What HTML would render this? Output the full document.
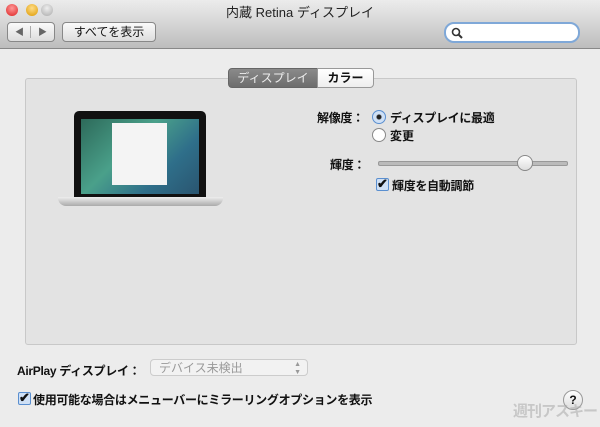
<html><head><style>
body{margin:0;width:600px;height:427px;background:#ececec;font-family:"Liberation Sans","Noto Sans CJK JP",sans-serif;font-size:12px;color:#111;position:relative;overflow:hidden}
.a{position:absolute;white-space:nowrap}
</style></head><body>
<div class="a" style="left:0;top:0;width:600px;height:48px;background:linear-gradient(#ececec,#bdbdbd);border-bottom:1px solid #888"></div>
<div class="a" style="left:6px;top:4px;width:12px;height:12px;border-radius:50%;background:radial-gradient(circle at 50% 35%,#f99,#d22)"></div>
<div class="a" style="left:26px;top:4px;width:12px;height:12px;border-radius:50%;background:radial-gradient(circle at 50% 35%,#fd8,#d90)"></div>
<div class="a" style="left:41px;top:4px;width:12px;height:12px;border-radius:50%;background:radial-gradient(circle at 50% 35%,#eee,#aaa)"></div>
<div class="a" style="left:0;top:2px;width:600px;text-align:center;font-size:13px;color:#222">内蔵 Retina ディスプレイ</div>
<div class="a" style="left:7px;top:22px;width:46px;height:18px;border:1px solid #888;border-radius:4px;background:linear-gradient(#fafafa,#ddd);font-size:9px;color:#666;line-height:18px"><span style="position:absolute;left:7px">◀</span><span style="position:absolute;left:22px;top:3px;width:1px;height:12px;background:#aaa"></span><span style="position:absolute;left:30px">▶</span></div>
<div class="a" style="left:62px;top:22px;width:92px;height:18px;border:1px solid #888;border-radius:4px;background:linear-gradient(#fafafa,#ddd);text-align:center;line-height:18px;font-size:12px">すべてを表示</div>
<div class="a" style="left:444px;top:22px;width:132px;height:17px;border:2px solid #7fa8d8;border-radius:10px;background:#fff"><svg style="position:absolute;left:5px;top:3px" width="12" height="12"><circle cx="5" cy="5" r="3.5" fill="none" stroke="#333" stroke-width="1.6"/><line x1="7.5" y1="7.5" x2="11" y2="11" stroke="#333" stroke-width="2"/></svg></div>
<div class="a" style="left:25px;top:78px;width:550px;height:265px;background:#e3e3e3;border:1px solid #c8c8c8;border-radius:3px"></div>
<div class="a" style="left:228px;top:68px;width:88px;height:18px;border:1px solid #666;border-radius:4px 0 0 4px;background:linear-gradient(#8a8a8a,#6d6d6d);color:#eee;text-align:center;line-height:18px">ディスプレイ</div>
<div class="a" style="left:317px;top:68px;width:55px;height:18px;border:1px solid #999;border-radius:0 4px 4px 0;background:linear-gradient(#fff,#eee);text-align:center;line-height:18px;font-weight:bold">カラー</div>
<div class="a" style="left:74px;top:111px;width:132px;height:86px;background:#111;border-radius:5px 5px 0 0"></div>
<div class="a" style="left:81px;top:119px;width:118px;height:75px;background:linear-gradient(135deg,#2d6a5a,#4aa08a 40%,#2f6f8a 70%,#2a5570)"></div>
<div class="a" style="left:112px;top:123px;width:55px;height:62px;background:#f4f4f4"></div>
<div class="a" style="left:58px;top:197px;width:165px;height:9px;background:linear-gradient(#eee,#aaa);border-radius:0 0 8px 8px"></div>
<div class="a" style="left:317px;top:109px;font-weight:bold;letter-spacing:-0.3px">解像度：</div>
<div class="a" style="left:372px;top:110px;width:12px;height:12px;border-radius:50%;border:1px solid #5a8fd0;background:radial-gradient(circle,#222 2px,#cfe0f5 3px)"></div>
<div class="a" style="left:390px;top:109px;font-weight:bold;letter-spacing:-0.3px">ディスプレイに最適</div>
<div class="a" style="left:372px;top:128px;width:12px;height:12px;border-radius:50%;border:1px solid #888;background:#fff"></div>
<div class="a" style="left:390px;top:127px;font-weight:bold">変更</div>
<div class="a" style="left:330px;top:156px;font-weight:bold;letter-spacing:-0.3px">輝度：</div>
<div class="a" style="left:378px;top:161px;width:188px;height:3px;background:#bbb;border-radius:2px;border:1px solid #999"></div>
<div class="a" style="left:517px;top:155px;width:14px;height:14px;border-radius:50%;border:1px solid #888;background:linear-gradient(#fff,#ddd)"></div>
<div class="a" style="left:376px;top:178px;width:11px;height:11px;border:1px solid #5a8fd0;border-radius:2px;background:#cfe0f5;font-size:13px;line-height:10px;font-weight:bold">✔</div>
<div class="a" style="left:392px;top:177px;font-weight:bold;letter-spacing:-0.3px">輝度を自動調節</div>
<div class="a" style="left:17px;top:362px;font-weight:bold;letter-spacing:-0.3px">AirPlay ディスプレイ：</div>
<div class="a" style="left:150px;top:359px;width:158px;height:17px;border:1px solid #ccc;border-radius:4px;background:#f2f2f2;color:#999;line-height:17px;padding-left:8px;box-sizing:border-box">デバイス未検出<span style="position:absolute;right:6px;font-size:7px;line-height:8px;top:1px">▲<br>▼</span></div>
<div class="a" style="left:18px;top:392px;width:11px;height:11px;border:1px solid #5a8fd0;border-radius:2px;background:#cfe0f5;font-size:13px;line-height:10px;font-weight:bold">✔</div>
<div class="a" style="left:33px;top:391px;font-weight:bold;letter-spacing:-0.3px">使用可能な場合はメニューバーにミラーリングオプションを表示</div>
<div class="a" style="left:563px;top:390px;width:18px;height:18px;border-radius:50%;border:1px solid #999;background:linear-gradient(#fff,#ddd);text-align:center;line-height:18px;font-weight:bold">?</div>
<div class="a" style="left:513px;top:400px;font-size:15px;letter-spacing:-1px;color:rgba(170,170,170,.55);font-weight:bold">週刊アスキー</div>
</body></html>
